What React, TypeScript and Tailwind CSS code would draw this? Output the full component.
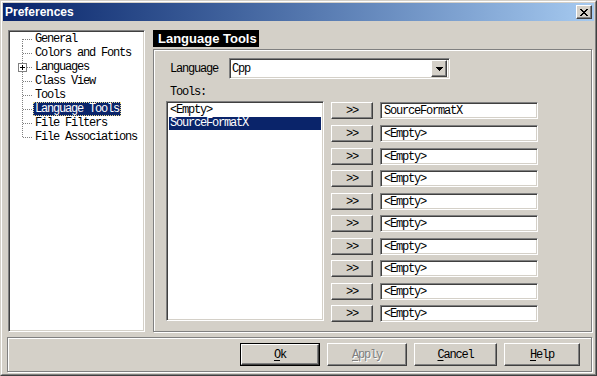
import React from 'react';

const mono = "font-['Liberation_Mono',monospace] text-[12px] tracking-[-1.2px]";
const raised = 'border border-t-white border-l-white border-r-[#404040] border-b-[#404040] shadow-[inset_-1px_-1px_0_#808080]';
const sunken = 'border border-t-[#808080] border-l-[#808080] border-r-white border-b-white shadow-[inset_1px_1px_0_#404040,inset_-1px_-1px_0_#d4d0c8]';
const etched = 'border border-[#808080] shadow-[inset_1px_1px_0_#fff,1px_1px_0_#fff]';

const treeItems = [
  'General',
  'Colors and Fonts',
  'Languages',
  'Class View',
  'Tools',
  'Language Tools',
  'File Filters',
  'File Associations',
];

// gaps between tool rows, the rows sit on a 22.5px pitch
const rowGaps = ['mt-0', 'mt-[6px]', 'mt-[6px]', 'mt-[5px]', 'mt-[6px]', 'mt-[5px]', 'mt-[6px]', 'mt-[5px]', 'mt-[6px]', 'mt-[5px]'];
const toolSlots = ['SourceFormatX', '<Empty>', '<Empty>', '<Empty>', '<Empty>', '<Empty>', '<Empty>', '<Empty>', '<Empty>', '<Empty>'];

const TreeConnector = ({ index, last, expandable }: { index: number; last: boolean; expandable: boolean }) => (
  <svg width="23" height="14" className="shrink-0" shapeRendering="crispEdges">
    <line
      x1="12.5"
      x2="12.5"
      y1={index === 0 ? 7 : 0}
      y2={last ? 8 : 14}
      stroke="#808080"
      strokeDasharray="1 1"
    />
    <line x1="13" x2="22" y1="7.5" y2="7.5" stroke="#808080" strokeDasharray="1 1" />
    {expandable && (
      <g>
        <rect x="8.5" y="3.5" width="8" height="8" fill="#fff" stroke="#808080" />
        <line x1="10" x2="15" y1="7.5" y2="7.5" stroke="#000" />
        <line x1="12.5" x2="12.5" y1="5" y2="10" stroke="#000" />
      </g>
    )}
  </svg>
);

const DialogButton = ({
  label,
  hot,
  width,
  isDefault,
  disabled,
}: {
  label: string;
  hot: string;
  width: string;
  isDefault?: boolean;
  disabled?: boolean;
}) => {
  const rest = label.slice(1);
  return (
    <div className={`${width} h-[23px] ${isDefault ? 'border border-black' : ''}`}>
      <div className={`h-full w-full ${raised} flex items-center justify-center bg-[#d4d0c8]`}>
        <span className={`${mono} ${disabled ? 'text-[#808080] [text-shadow:1px_1px_0_#fff]' : 'text-black'}`}>
          <span className="underline underline-offset-2">{hot}</span>
          {rest}
        </span>
      </div>
    </div>
  );
};

export default function App() {
  return (
    <div className="w-[597px] h-[376px] bg-[#d4d0c8] border border-t-[#d4d0c8] border-l-[#d4d0c8] border-r-[#404040] border-b-[#404040] overflow-hidden">
      <div className="h-full border border-t-white border-l-white border-r-[#808080] border-b-[#808080] p-px flex flex-col">
        {/* Title bar */}
        <div className="h-[18px] shrink-0 bg-gradient-to-r from-[#0a246a] to-[#a6caf0] flex items-center justify-between pl-[2px] pr-[2px]">
          <span className="font-['Liberation_Sans',Arial,sans-serif] font-bold text-[12px] text-white leading-none">
            Preferences
          </span>
          <div className={`w-[16px] h-[14px] bg-[#d4d0c8] ${raised} flex items-center justify-center`}>
            <svg width="8" height="7" viewBox="0 0 8 7" shapeRendering="crispEdges">
              <path d="M0 0h2v1h1v1h2v-1h1v-1h2v1h-1v1h-1v1h-1v1h1v1h1v1h1v1h-2v-1h-1v-1h-2v1h-1v1h-2v-1h1v-1h1v-1h1v-1h-1v-1h-1v-1h-1z" fill="#000" />
            </svg>
          </div>
        </div>

        {/* Main area */}
        <div className="flex pt-[9px] pl-[5px] pr-[2px] gap-[8px] h-[311px] shrink-0">
          {/* Category tree */}
          <div className={`w-[137px] h-full bg-white ${sunken} pl-px pt-px`}>
            {treeItems.map((item, i) => (
              <div key={item} className="flex h-[14px] items-center">
                <TreeConnector index={i} last={i === treeItems.length - 1} expandable={item === 'Languages'} />
                <span
                  className={`${mono} leading-[12px] h-[14px] px-[1px] border border-dotted whitespace-nowrap ${
                    item === 'Language Tools'
                      ? 'bg-[#0a246a] text-white border-[#e8d890]'
                      : 'text-black border-transparent'
                  }`}
                >
                  {item}
                </span>
              </div>
            ))}
          </div>

          {/* Page */}
          <div className="flex-1 flex flex-col">
            <div className="self-start h-[17px] bg-black pl-[5px] pr-[2px] flex items-center">
              <span className="font-['Liberation_Sans',Arial,sans-serif] font-bold text-[13px] text-white leading-none">
                Language Tools
              </span>
            </div>
            <div className={`mt-[2px] flex-1 ${etched} pl-[12px] pt-[8px]`}>
              <div className="flex items-center h-[21px]">
                <span className={`${mono} text-black w-[63px] pl-[4px]`}>Language</span>
                <div className={`w-[221px] h-[21px] bg-white ${sunken} flex items-center justify-between pl-[2px] pr-[2px]`}>
                  <span className={`${mono} text-black`}>Cpp</span>
                  <div className={`w-[16px] h-[17px] bg-[#d4d0c8] ${raised} flex items-center justify-center`}>
                    <svg width="7" height="4" viewBox="0 0 7 4" shapeRendering="crispEdges">
                      <path d="M0 0h7v1h-1v1h-1v1h-1v1h-1v-1h-1v-1h-1v-1h-1z" fill="#000" />
                    </svg>
                  </div>
                </div>
              </div>
              <div className={`${mono} text-black pl-[4px] mt-[6px] leading-[14px]`}>Tools:</div>
              <div className="flex mt-[2px]">
                <div className={`w-[158px] h-[220px] bg-white ${sunken} p-[2px]`}>
                  <div className={`${mono} text-black h-[13px] leading-[13px] pl-px`}>&lt;Empty&gt;</div>
                  <div className={`${mono} text-white bg-[#0a246a] h-[13px] leading-[13px] pl-px`}>SourceFormatX</div>
                </div>
                <div className="flex flex-col ml-[7px] pt-px">
                  {toolSlots.map((slot, i) => (
                    <div key={i} className={`flex items-center ${rowGaps[i]}`}>
                      <div className={`w-[42px] h-[17px] bg-[#d4d0c8] ${raised} flex items-center justify-center`}>
                        <span className={`${mono} text-black leading-none`}>&gt;&gt;</span>
                      </div>
                      <div className={`ml-[7px] w-[158px] h-[17px] bg-white ${sunken} flex items-center pl-[3px]`}>
                        <span className={`${mono} text-black leading-none`}>{slot}</span>
                      </div>
                    </div>
                  ))}
                </div>
              </div>
            </div>
          </div>
        </div>

        {/* Button bar */}
        <div className={`mt-[5px] ml-[4px] mr-[2px] h-[35px] ${etched} flex items-center justify-end gap-[7px] pr-[11px]`}>
          <DialogButton label="Ok" hot="O" width="w-[80px]" isDefault />
          <DialogButton label="Apply" hot="A" width="w-[80px]" disabled />
          <DialogButton label="Cancel" hot="C" width="w-[83px]" />
          <DialogButton label="Help" hot="H" width="w-[76px]" />
        </div>
      </div>
    </div>
  );
}
